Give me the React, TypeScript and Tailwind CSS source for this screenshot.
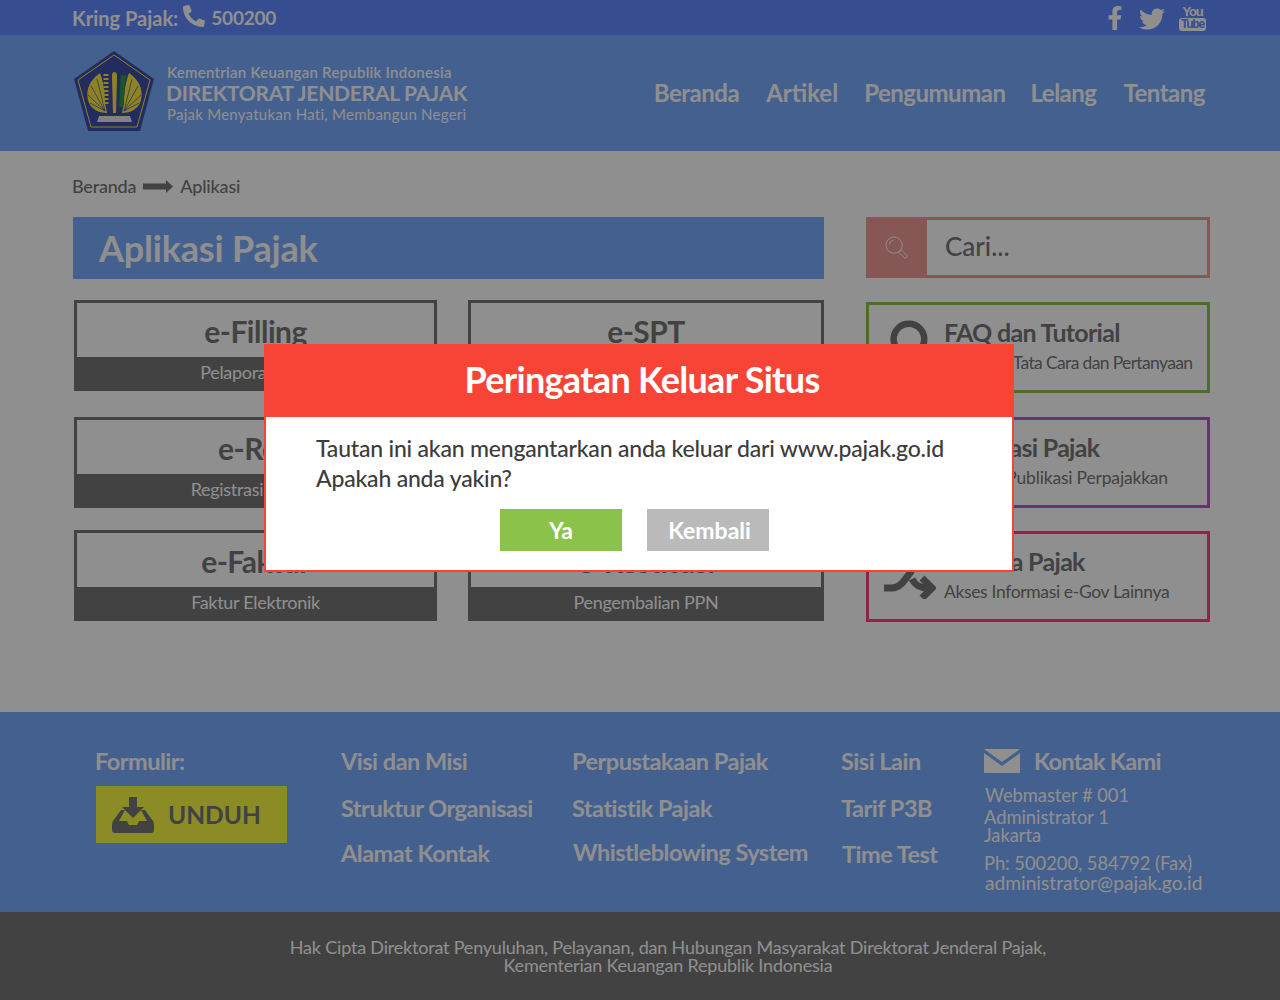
import { FaFacebookF, FaPhoneAlt, FaTwitter } from 'react-icons/fa';
import { Search } from 'lucide-react';

const appCards = [
  { title: 'e-Filling', sub: 'Pelaporan SPT', cls: '' },
  { title: 'e-SPT', sub: 'Pengisian SPT', cls: '' },
  { title: 'e-Reg', sub: 'Registrasi NPWP', cls: 'mt-[26px]' },
  { title: 'e-Nofa', sub: 'Nomor Faktur', cls: 'mt-[26px]' },
  { title: 'e-Faktur', sub: 'Faktur Elektronik', cls: 'mt-[22px]' },
  { title: 'e-Restitusi', sub: 'Pengembalian PPN', cls: 'mt-[22px]' },
];

function Logo() {
  return (
    <svg viewBox="0 0 80 80" className="w-[80px] h-[80px] shrink-0 -mt-[4px]">
      <polygon points="40,0 80,28 66,80 14,80 0,28" fill="#3f4fa8" />
      <polygon points="40,4 76,29 63,76 17,76 4,29" fill="none" stroke="#ffe845" strokeWidth="1" />
      {/* wings */}
      <path d="M26,22 C14,30 11,42 15,52 C18,58 24,62 33,62 L31,52 C31,40 29,30 26,22 Z" fill="#ffe845" />
      <path d="M55,22 C67,30 70,42 66,52 C63,58 57,62 48,62 L50,52 C50,40 52,30 55,22 Z" fill="#ffe845" />
      <path d="M31,60 L23,28 M31,60 L17,35 M31,60 L14,44 M31,60 L16,52 M50,60 L58,28 M50,60 L64,35 M50,60 L67,44 M50,60 L65,52" stroke="#3f4fa8" strokeWidth="0.7" />
      {/* rice, pillar, leaf */}
      <path d="M32,23 L32,54" stroke="#ffe845" strokeWidth="5" strokeDasharray="2 2" />
      <path d="M40.5,21 C38,21 38,24 38,26 L39,62 L42,62 L43,26 C43,24 43,21 40.5,21 Z" fill="#ffe845" />
      <path d="M47,24 L52,24 L49,56 L45,56 Z" fill="#2e9b4a" />
      {/* ribbon */}
      <path d="M25,65 L56,65 L58,71 L23,71 Z" fill="#e8e8e8" />
    </svg>
  );
}

function AppCard({ title, sub, cls }: { title: string; sub: string; cls: string }) {
  return (
    <div className={`h-[91px] border-[3px] border-[#767676] flex flex-col ${cls}`}>
      <div className="h-[54px] pt-[1px] flex items-center justify-center text-[30px] font-bold leading-[38px] text-[#767676] tracking-[-0.5px]">
        {title}
      </div>
      <div className="flex-1 bg-[#767676] flex items-center justify-center text-[18px] text-white tracking-[-0.3px]">
        {sub}
      </div>
    </div>
  );
}

function SideCard({ title, sub, border, cls, subCls, icon }: { title: string; sub: string; border: string; cls: string; subCls: string; icon: React.ReactNode }) {
  return (
    <div className={`h-[91px] border-[3px] flex ${border} ${cls}`}>
      <div className="w-[75px] shrink-0 pl-[15px] pt-[13px]">{icon}</div>
      <div className="pt-[11px] whitespace-nowrap">
        <div className="text-[25px] font-bold leading-[32px] text-[#767676] tracking-[-0.7px]">{title}</div>
        <div className={`text-[17.5px] leading-[24px] mt-[3px] text-[#767676] ${subCls}`}>{sub}</div>
      </div>
    </div>
  );
}

function SearchThin() {
  return (
    <svg viewBox="0 0 24 24" className="w-[23px] h-[23px]" fill="none" stroke="currentColor" strokeWidth="1">
      <circle cx="9.5" cy="9.5" r="8.5" />
      <path d="M4.5,9 A5,5 0 0 1 9,4.5" />
      <path d="M15.5,15.5 L17,14.5 L23,20.5 C23.5,21.5 22,23.5 20.5,23 L14.5,17 Z" />
    </svg>
  );
}

function LinkIcon() {
  return (
    <svg viewBox="0 0 52 52" className="w-[52px] h-[52px] text-[#767676]" fill="none" stroke="currentColor" strokeWidth="7">
      <path d="M0,41 H8 C16,41 20,34 26,26 C30,20 34,11 46,11" />
      <path d="M0,11 H8 C14,11 18,14 22,20 M28,32 C31,38 35,41 44,41" />
      <path d="M36,11 L46,11 M38,31 L48,41 L38,51" />
    </svg>
  );
}

function InboxIcon() {
  return (
    <svg viewBox="0 0 42 36" className="w-[42px] h-[36px] text-[#767676]" fill="currentColor">
      <path d="M17,0 H25 V10 H32 L21,21 L10,10 H17 Z" />
      <path d="M9,13 L13,13 L7,24 H15 L17,28 H25 L27,24 H35 L29,13 H33 L41,24 C42,26 42,27 42,29 V33 C42,35 41,36 39,36 H3 C1,36 0,35 0,33 V29 C0,27 0,26 1,24 Z" />
    </svg>
  );
}

function MailIcon() {
  return (
    <svg viewBox="0 0 36 24" className="w-[36px] h-[24px]" fill="currentColor">
      <path d="M0,0 H36 L18,13 Z" />
      <path d="M0,4 L18,17 L36,4 V23 C36,24 35,24 35,24 H1 C1,24 0,24 0,23 Z" />
    </svg>
  );
}

export default function App() {
  return (
    <div className="relative w-[1280px] h-[1000px] overflow-hidden bg-white text-white [font-family:Lato,sans-serif]">
      {/* Top bar */}
      <div className="h-[35px] bg-[#6189ff] flex items-center justify-between pl-[72px] pr-[74px]">
        <div className="flex items-center text-[20px] font-bold">
          <span>Kring Pajak:</span>
          <FaPhoneAlt className="w-[22px] h-[22px] -mt-[4px] ml-[5px]" />
          <span className="ml-[6px] mt-px text-[19px] tracking-[-0.2px]">500200</span>
        </div>
        <div className="flex items-center">
          <FaFacebookF className="w-[18px] h-[24px] mt-[1px]" />
          <FaTwitter className="w-[30px] h-[26px] ml-[13px] mt-[2px]" />
          <div className="ml-[12px] w-[27px] flex flex-col items-center leading-none mt-[1px]">
            <span className="text-[13px] font-bold leading-[12px] [font-family:'Liberation_Sans',sans-serif] tracking-[-1.2px]">You</span>
            <span className="w-[27px] h-[13px] rounded-[3px] bg-white text-[#6189ff] text-[12px] font-bold leading-[13px] text-center [font-family:'Liberation_Sans',sans-serif] tracking-[-1.2px]">Tube</span>
          </div>
        </div>
      </div>

      {/* Header */}
      <header className="h-[116px] bg-[#7aabff] flex items-center justify-between pl-[74px] pr-[75px]">
        <div className="flex items-center gap-[12px]">
          <Logo />
          <div className="w-[310px]">
            <div className="text-[15px] font-semibold leading-[18px] tracking-[0.25px] pl-px">Kementrian Keuangan Republik Indonesia</div>
            <div className="text-[21px] font-bold leading-[24px] tracking-[-0.25px] whitespace-nowrap">DIREKTORAT JENDERAL PAJAK</div>
            <div className="text-[15px] leading-[18px] tracking-[0.25px] pl-px">Pajak Menyatukan Hati, Membangun Negeri</div>
          </div>
        </div>
        <nav className="flex items-center text-[24px] font-bold tracking-[-0.5px]">
          <a>Beranda</a>
          <a className="ml-[27px] tracking-normal">Artikel</a>
          <a className="ml-[26px]">Pengumuman</a>
          <a className="ml-[25px]">Lelang</a>
          <a className="ml-[27px]">Tentang</a>
        </nav>
      </header>

      {/* Main */}
      <main className="h-[561px] pl-[72px]">
        <div className="h-[66px] pt-[22px] flex items-start gap-[7px] text-[18px] leading-[26px] text-[#767676] font-medium tracking-[-0.2px]">
          <span>Beranda</span>
          <svg viewBox="0 0 30 13" className="w-[30px] h-[13px] mt-[7px]" fill="currentColor">
            <path d="M0,3.5 H23 V0 L30,6.5 L23,13 V9.5 H0 Z" />
          </svg>
          <span>Aplikasi</span>
        </div>
        <div className="flex pl-px">
          <div className="w-[751px]">
            <h1 className="h-[62px] bg-[#7aabff] pl-[26px] flex items-center text-[36px] font-bold tracking-[-0.2px]">Aplikasi Pajak</h1>
            <div className="mt-[21px] ml-px grid grid-cols-[363px_356px] gap-x-[31px]">
              {appCards.map((card) => (
                <AppCard key={card.title} {...card} />
              ))}
            </div>
          </div>
          <div className="w-[344px] ml-[42px]">
            <div className="h-[61px] border-[3px] border-[#f09c98] flex">
              <div className="w-[61px] shrink-0 -ml-[3px] -my-[3px] h-[61px] bg-[#f09c98] flex items-center justify-center">
                <SearchThin />
              </div>
              <div className="pl-[18px] flex items-center text-[26px] font-medium text-[#767676] pb-[2px]">Cari...</div>
            </div>
            <SideCard
              cls="mt-[24px]"
              subCls="tracking-[-0.65px]"
              border="border-[#8bc34a]"
              title="FAQ dan Tutorial"
              sub="Informasi Tata Cara dan Pertanyaan"
              icon={<Search className="w-[46px] h-[46px] -scale-x-100 text-[#767676]" strokeWidth={3.4} />}
            />
            <SideCard
              cls="mt-[24px]"
              subCls="tracking-[-0.18px]"
              border="border-[#b85bbf]"
              title="Publikasi Pajak"
              sub="Seputar Publikasi Perpajakkan"
              icon={<Search className="w-[46px] h-[46px] text-[#767676]" strokeWidth={3.4} />}
            />
            <SideCard
              cls="mt-[23px]"
              subCls="tracking-[-0.35px]"
              border="border-[#ff4080]"
              title="e-Mitra Pajak"
              sub="Akses Informasi e-Gov Lainnya"
              icon={<LinkIcon />}
            />
          </div>
        </div>
      </main>

      {/* Footer */}
      <footer className="h-[200px] bg-[#7aabff] flex pt-[34px] text-[23.5px] font-bold tracking-[-0.5px] leading-[30px]">
        <div className="w-[246px] ml-[95px]">
          <div>Formulir:</div>
          <div className="mt-[10px] ml-px w-[191px] h-[57px] bg-[#f9f946] flex items-center pl-[16px] gap-[14px] text-[#767676] text-[24.5px] tracking-normal">
            <InboxIcon />
            <span>UNDUH</span>
          </div>
        </div>
        <div className="w-[231px] flex flex-col">
          <a>Visi dan Misi</a>
          <a className="mt-[17px]">Struktur Organisasi</a>
          <a className="mt-[15px]">Alamat Kontak</a>
        </div>
        <div className="w-[269px] flex flex-col">
          <a>Perpustakaan Pajak</a>
          <a className="mt-[17px]">Statistik Pajak</a>
          <a className="mt-[14px] ml-px">Whistleblowing System</a>
        </div>
        <div className="w-[143px] flex flex-col">
          <a>Sisi Lain</a>
          <a className="mt-[17px]">Tarif P3B</a>
          <a className="mt-[16px] ml-px">Time Test</a>
        </div>
        <div>
          <div className="flex items-center gap-[14px]">
            <MailIcon />
            <span className="tracking-[-0.7px]">Kontak Kami</span>
          </div>
          <div className="mt-[9px] text-[18.3px] font-normal leading-[20px] tracking-normal">
            <div className="ml-px">Webmaster # 001</div>
            <div className="mt-[2px]">Administrator 1</div>
            <div className="-mt-[2px]">Jakarta</div>
            <div className="mt-[8px]">Ph: 500200, 584792 (Fax)</div>
            <div className="ml-px text-[19.2px]">administrator@pajak.go.id</div>
          </div>
        </div>
      </footer>

      {/* Copyright */}
      <div className="h-[88px] bg-[#767676] pt-[26px] pl-[56px] text-center text-[18px] leading-[18px] tracking-[-0.2px]">
        <div>Hak Cipta Direktorat Penyuluhan, Pelayanan, dan Hubungan Masyarakat Direktorat Jenderal Pajak,</div>
        <div>Kementerian Keuangan Republik Indonesia</div>
      </div>

      {/* Dim layer */}
      <div className="absolute inset-0 bg-black/[0.44]" />

      {/* Modal */}
      <div className="absolute left-[264px] top-[344px] w-[750px] h-[228px] bg-white border-2 border-[#f84337]">
        <div className="-mx-[2px] -mt-[2px] h-[73px] bg-[#f84337] flex items-center justify-center pb-[3px] pl-[6px] text-[36px] font-bold tracking-[-0.7px]">
          Peringatan Keluar Situs
        </div>
        <div className="pl-[50px] pt-[16px] text-[23px] leading-[30px] text-[#3c3c3c] font-medium tracking-[-0.2px]">
          <div>Tautan ini akan mengantarkan anda keluar dari www.pajak.go.id</div>
          <div>Apakah anda yakin?</div>
        </div>
        <div className="flex pl-[234px] mt-[16px] gap-[25px] text-[23px] font-bold">
          <button className="w-[122px] h-[42px] bg-[#8bc34a]">Ya</button>
          <button className="w-[122px] h-[42px] pl-[3px] bg-[#bababa]">Kembali</button>
        </div>
      </div>
    </div>
  );
}
